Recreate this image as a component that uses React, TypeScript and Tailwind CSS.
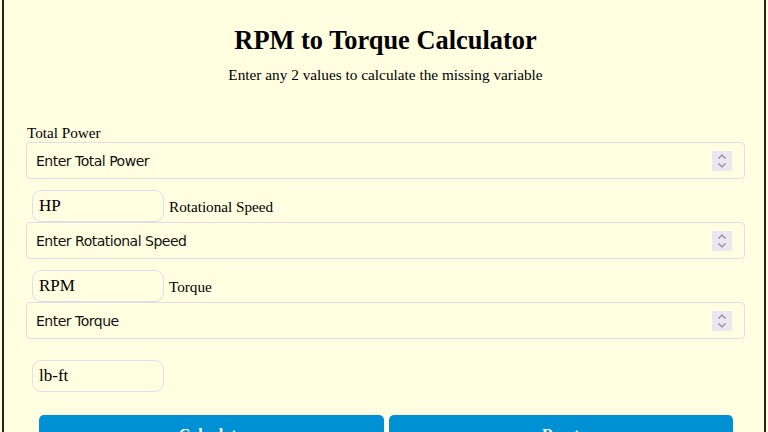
import React, { useState } from 'react';

const serif = { fontFamily: '"Liberation Serif", "Times New Roman", serif' };

const NumberField: React.FC<{ placeholder: string; value: string; onChange: (v: string) => void }> = ({ placeholder, value, onChange }) => (
    <div className="relative h-[37px] rounded-[4px] border border-[#dcdfe6] bg-[#fffee0] flex items-center">
        <input
            type="text"
            value={value}
            onChange={e => onChange(e.target.value)}
            placeholder={placeholder}
            className="w-full h-full bg-transparent px-[9px] text-[14px] text-black placeholder:text-[#111] outline-none font-['DejaVu_Sans',sans-serif] tracking-[-0.5px]"
        />
        <div className="absolute right-[12px] top-[8px] w-[20px] h-[20px] bg-[#e9e7ef] flex flex-col items-center justify-center">
            <svg width="10" height="16" viewBox="0 0 10 16" fill="none" stroke="#8a8a96" strokeWidth="1.2">
                <path d="M1.5 5.5 L5 2 L8.5 5.5" />
                <path d="M1.5 10.5 L5 14 L8.5 10.5" />
            </svg>
        </div>
    </div>
);

const UnitSelect: React.FC<{ value: string }> = ({ value }) => (
    <div className="w-[132px] h-[32px] rounded-[9px] border border-[#d9e0ee] bg-[#fffee0] flex items-center px-[6px] text-[17px] text-black" style={serif}>
        {value}
    </div>
);

export default function App() {
    const [power, setPower] = useState('');
    const [speed, setSpeed] = useState('');
    const [torque, setTorque] = useState('');

    const reset = () => {
        setPower('');
        setSpeed('');
        setTorque('');
    };

    return (
        <div className="w-[768px] h-[432px] overflow-hidden bg-[#fffee0]">
            <div className="mx-[2px] h-full border-x-2 border-[#222] pl-[22px] pr-[19px] pt-[25px]" style={serif}>
                <h1 className="text-center text-[26.4px] font-bold leading-[30px] text-black">RPM to Torque Calculator</h1>
                <p className="text-center text-[15.3px] mt-[11px] leading-[18px] text-black">Enter any 2 values to calculate the missing variable</p>

                <div className="mt-[40px]">
                    <div className="text-[15.2px] leading-[18px] pl-[1px] text-black">Total Power</div>
                    <NumberField placeholder="Enter Total Power" value={power} onChange={setPower} />
                    <div className="flex items-center gap-[5px] mt-[11px] pl-[6px]">
                        <UnitSelect value="HP" />
                        <span className="text-[15.2px] pt-[3px]">Rotational Speed</span>
                    </div>
                    <NumberField placeholder="Enter Rotational Speed" value={speed} onChange={setSpeed} />
                    <div className="flex items-center gap-[5px] mt-[11px] pl-[6px]">
                        <UnitSelect value="RPM" />
                        <span className="text-[15.2px] pt-[3px]">Torque</span>
                    </div>
                    <NumberField placeholder="Enter Torque" value={torque} onChange={setTorque} />
                    <div className="mt-[21px] pl-[6px]">
                        <UnitSelect value="lb-ft" />
                    </div>
                    <div className="flex gap-[5px] mt-[23px] pl-[13px] pr-[12px]">
                        <button className="flex-1 h-[40px] rounded-[5px] bg-[#0091d5] text-white text-[16px] font-bold">Calculate</button>
                        <button onClick={reset} className="flex-1 h-[40px] rounded-[5px] bg-[#0091d5] text-white text-[16px] font-bold">Reset</button>
                    </div>
                </div>
            </div>
        </div>
    );
}
